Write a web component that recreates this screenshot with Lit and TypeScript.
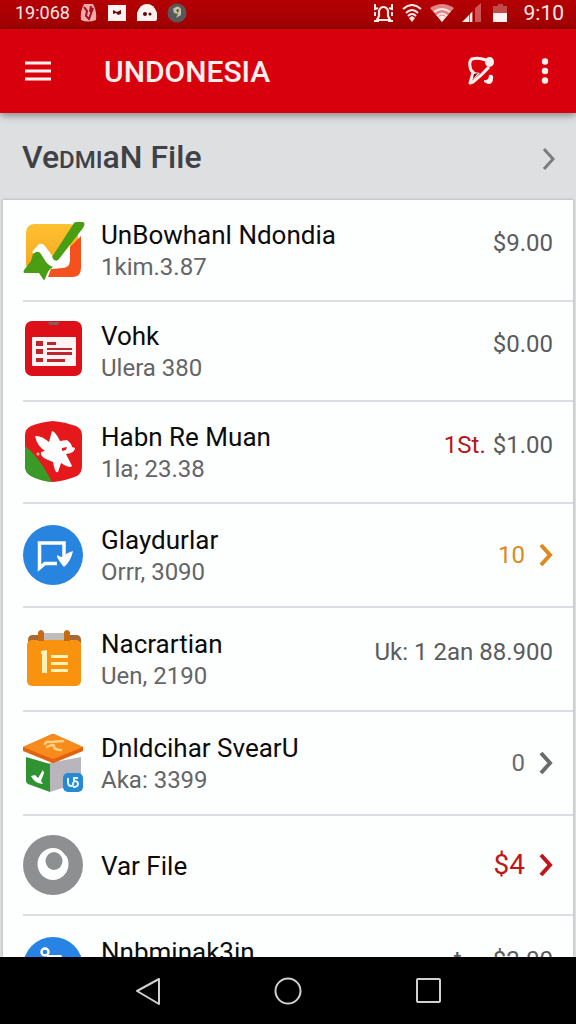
import { LitElement, html, css, svg, nothing, type TemplateResult } from "lit";
import { customElement, property } from "lit/decorators.js";
import { classMap } from "lit/directives/class-map.js";

type Size = "short" | "medium" | "tall";

interface Entry {
  icon: string;
  title: string;
  detail?: string;
  value: string;
  prefix?: string;
  mutedPrefix?: boolean;
  tone?: "amber" | "red" | "grey";
  link?: boolean;
  size: Size;
}

const ENTRIES: Entry[] = [
  { icon: "check", title: "UnBowhanl Ndondia", detail: "1kim.3.87", value: "$9.00", size: "medium" },
  { icon: "card", title: "Vohk", detail: "Ulera 380", value: "$0.00", size: "short" },
  { icon: "shield", title: "Habn Re Muan", detail: "1la; 23.38", prefix: "1St.", value: "$1.00", size: "medium" },
  { icon: "chat", title: "Glaydurlar", detail: "Orrr, 3090", value: "10", tone: "amber", link: true, size: "tall" },
  { icon: "calendar", title: "Nacrartian", detail: "Uen, 2190", value: "Uk: 1 2an 88.900", size: "tall" },
  { icon: "box", title: "Dnldcihar SvearU", detail: "Aka: 3399", value: "0", tone: "grey", link: true, size: "tall" },
  { icon: "ring", title: "Var File", value: "$4", tone: "red", link: true, size: "short" },
  { icon: "globe", title: "Nnbminak3in", detail: "\u00a0", prefix: "t.\u00a0\u00a0\u00a0", mutedPrefix: true, value: "$2.00", size: "tall" },
];

const ICONS: Record<string, TemplateResult> = {
  check: svg`
    <defs>
      <linearGradient id="y" x1="0" y1="0" x2="0" y2="1"><stop offset="0" stop-color="#fdc12f"/><stop offset="1" stop-color="#f9a825"/></linearGradient>
    </defs>
    <path d="M12 4H46Q54 4 55 12V46H3V13Q3 4 12 4Z" fill="url(#y)"/>
    <path d="M58 16V48Q58 57 49 57H25L29 46H46V28Z" fill="#f4511e"/>
    <path d="M9 32L15 25Q19 22 22 26L31 38 47 22V40Q47 47 40 48L29 49 20 44Z" fill="#fff"/>
    <path d="M51 3Q52 2 53 2H60Q63 3 60 8L36 39Q34 42 31 40L29 37Z" fill="#4a9e14"/>
    <path d="M10 34L13 32Q16 31 18 34L23 42Q26 46 30 47Q26 49 24 54L22 59Q21 61 20 59L16 53H1Q0 52 1 50L8 41Z" fill="#4a9e14"/>`,
  card: svg`
    <rect x="2" y="0" width="57" height="55" rx="7" fill="#dd1019"/>
    <path d="M24 1H37L34 4H27Z" fill="#8c5a5e"/>
    <rect x="9" y="16" width="44" height="29" rx="1" fill="#fff4f1"/>
    <path d="M13 20h7v5h-7zM13 28h7v5h-7zM13 37h7v4h-7zM24 21h9v3h-9zM24 27h25v2h-25zM24 31h25v3h-25zM24 38h18v3h-18z" fill="#bb2730"/>`,
  shield: svg`
    <path d="M30 -1Q42 0 53 4Q59 7 59 13V44Q59 51 54 54Q42 59 30 60Q18 59 8 54Q2 51 2 44V13Q2 7 8 4Q18 0 30 -1Z" fill="#e5181b"/>
    <path d="M2 24Q17 36 29 60Q17 59 8 54Q2 51 2 44Z" fill="#3a9a27"/>
    <path d="M12 14Q18 13 26 20L29 9Q32 9 37 19L44 18Q49 22 49 25L52 26Q52 31 43 32L49 44Q47 47 38 41L35 50Q32 52 30 40L25 38Q17 35 18 30L22 29Q14 24 12 14Z" fill="#fff"/>
    <path d="M39 26L44 25 43 28 39 29Z" fill="#e5181b"/>
    <circle cx="15" cy="32" r="1.5" fill="#ffb8ac"/>`,
  chat: svg`
    <circle cx="30" cy="30" r="30" fill="#2784df"/>
    <path d="M41 31V18H16.500V43L22 38.500H34" fill="none" stroke="#fff" stroke-width="3.500"/>
    <path d="M34 30L38 32 42 30Q44 28 50 26Q48 36 41 42Q38 39 34 32Z" fill="#fff"/>`,
  calendar: svg`
    <path d="M5 14V11Q5 6 10 6H53Q58 6 58 11V14Z" fill="#a56a35"/>
    <path d="M21 4H42V12H21Z" fill="#bfbcb9"/>
    <rect x="4" y="11" width="54" height="46" rx="5" fill="#f9920f"/>
    <path d="M15 12V3Q18 -1 21 3V12ZM41 12V3Q44 -1 47 3V12Z" fill="#c76b12"/>
    <path d="M18 22L24 21V44H19V25H18ZM28 26h17v3h-17zM28 33h17v3h-17zM28 40h17v3h-17z" fill="#fff1b8"/>`,
  box: svg`
    <path d="M26 30L58 24V49L27 59Z" fill="#b9b5bc"/>
    <path d="M3 24L27 31V59L5 51Q3 50 3 48Z" fill="#2f9331"/>
    <path d="M0 14L27 2Q30 0 33 2L60 14V18L33 29Q30 31 27 29L0 18Z" fill="#e2620d"/>
    <path d="M0 14L27 2Q30 0 33 2L60 14 33 25Q30 27 27 25Z" fill="#f98a1c"/>
    <path d="M22 11Q23 8 28 9L40 8M24 14Q32 10 31 14Q32 17 38 17" fill="none" stroke="#ffd083" stroke-width="2.500" stroke-linecap="round"/>
    <path d="M8 43L12 42 15 45 20 37 21 40 18 48 20 51Q11 50 8 43Z" fill="#fff"/>
    <rect x="40" y="40" width="20" height="19" rx="5" fill="#2589d4"/>
    <path d="M45 45V49Q45 53 48 53T50 49M55 45H51V48Q55 48 55 51T50 54" fill="none" stroke="#e3f4ff" stroke-width="2"/>`,
  ring: svg`
    <circle cx="30" cy="30" r="30" fill="#8e8f90"/>
    <ellipse cx="30" cy="29" rx="15.500" ry="16" fill="#fff"/>
    <ellipse cx="31" cy="26" rx="8.500" ry="9" fill="#8e8f90"/>
    <path d="M37 14L44 17 43 21Z" fill="#8e8f90"/>`,
  globe: svg`
    <circle cx="30" cy="30" r="30" fill="#2784e4"/>
    <circle cx="22" cy="15" r="3.500" fill="none" stroke="#fff" stroke-width="2.500"/>
    <path d="M24 18H38L41 22V30H24Z" fill="#fff"/>`,
};

@customElement("row-chevron")
export class RowChevron extends LitElement {
  @property({ type: Boolean, reflect: true }) thin = false;

  static styles = css`
    :host { display: block; width: 14px; height: 24px; }
    svg { display: block; width: 100%; height: 100%; }
    path { fill: none; stroke: currentColor; stroke-width: 4; }
    :host([thin]) path { stroke-width: 3; }
  `;

  render() {
    return html`<svg viewBox="0 0 14 24" aria-hidden="true"><path d="M2 2L11 12 2 22" /></svg>`;
  }
}

@customElement("status-bar")
export class StatusBar extends LitElement {
  static styles = css`
    :host {
      display: flex;
      align-items: center;
      justify-content: space-between;
      height: 29px;
      padding: 0 12px 4px 15px;
      box-sizing: border-box;
      background: linear-gradient(#b40004, #a00002);
      color: #ffe9e6;
      font-size: 18px;
      line-height: 24px;
    }
    .group { display: flex; align-items: center; gap: 10px; }
    .right { gap: 8px; }
    .clock { margin-left: 6px; font-size: 21px; }
    svg { display: block; }
  `;

  render() {
    return html`
      <div class="group">
        <span>19:068</span>
        <svg width="17" height="20" viewBox="0 0 17 20">
          <path d="M4 1H13Q17 8 16 17Q8 20 1 17Q0 8 4 1Z" fill="#f3a9aa"/>
          <path d="M4 4L7 8 6 13 9 16 13 5 10 9 11 3" fill="none" stroke="#a4101a" stroke-width="2"/>
        </svg>
        <svg width="20" height="18" viewBox="0 0 20 18">
          <rect x="1" y="1" width="18" height="16" fill="#fff3f1"/>
          <path d="M6 6L10 8 14 6V10L11 11 9 9 6 10Z" fill="#6b0a0c"/>
        </svg>
        <svg width="20" height="18" viewBox="0 0 20 18">
          <path d="M0 17V9Q3 0 10 0T20 9V15Q20 17 18 17Z" fill="#fff3f1"/>
          <circle cx="8" cy="10" r="2" fill="#5c0a0c"/><circle cx="13" cy="10" r="1.500" fill="#5c0a0c"/>
        </svg>
        <svg width="20" height="20" viewBox="0 0 20 20">
          <circle cx="10" cy="10" r="9.500" fill="#58595c"/>
          <path d="M6 6Q11 1 14 6V12L9 15 11 11 7 10Z" fill="#c9c39b"/>
          <path d="M9 7L12 6 11 10Z" fill="#3c4a52"/>
        </svg>
      </div>
      <div class="group right">
        <svg width="21" height="20" viewBox="0 0 21 20">
          <path d="M4 17H17L15 13V8Q14 4 10.500 4T6 8V13Z" fill="none" stroke="currentColor" stroke-width="2.200"/>
          <path d="M2 1V6L5 5M2 9V13M19 1V6L16 5M19 9V13M1 18H6M20 18H15" fill="none" stroke="currentColor" stroke-width="2"/>
        </svg>
        <svg width="20" height="18" viewBox="0 0 20 18">
          <path d="M1 5Q10 -3 19 5M4 9Q10 3 16 9M6 12Q10 8 14 12" fill="none" stroke="currentColor" stroke-width="2"/>
          <path d="M7 14L10 12 13 14 10 18Z" fill="currentColor"/>
        </svg>
        <svg width="24" height="18" viewBox="0 0 24 18">
          <path d="M0 4Q12 -4 24 4L12 18Z" fill="#e08583"/>
          <path d="M4 8Q12 2 20 8M7 12Q12 7 17 12" fill="none" stroke="currentColor" stroke-width="2"/>
          <path d="M8 13Q12 10 16 13L12 18Z" fill="currentColor"/>
        </svg>
        <svg width="20" height="20" viewBox="0 0 20 20">
          <path d="M7 19V12L11 8V19ZM13 19V5L19 0V19Z" fill="#cf5554"/>
          <path d="M0 19L7 12V19ZM8 11L10 9V19H8Z" fill="currentColor"/>
        </svg>
        <svg width="20" height="20" viewBox="0 0 20 20">
          <path d="M3 3H8V1H13V3H17V10H3Z" fill="#c14a4b"/>
          <path d="M3 10H17V19H3Z" fill="#fff3f1"/>
        </svg>
        <span class="clock">9:10</span>
      </div>
    `;
  }
}

@customElement("entry-row")
export class EntryRow extends LitElement {
  @property({ attribute: false }) entry!: Entry;

  static styles = css`
    :host { display: block; }
    .row {
      display: flex;
      align-items: center;
      gap: 18px;
      box-sizing: border-box;
      margin-left: 20px;
      padding-right: 20px;
      border-bottom: 2px solid #dcdde0;
      color: inherit;
      text-decoration: none;
    }
    .short { min-height: 100px; }
    .medium { min-height: 102px; }
    .tall { min-height: 104px; }
    .icon { flex: none; width: 60px; height: 60px; overflow: visible; }
    .text { flex: 1; min-width: 0; padding-top: 2px; color: #0c0c0d; font-size: 26px; line-height: 32px; }
    .detail { color: #646567; font-size: 24px; }
    .text > span { display: block; white-space: nowrap; }
    .value {
      display: flex;
      align-items: center;
      gap: 14px;
      color: #5a5b5d;
      font-size: 24px;
      line-height: 32px;
      white-space: nowrap;
    }
    .plain { gap: 7px; padding-bottom: 14px; }
    .prefix { color: #b5171c; }
    .muted { color: inherit; }
    .amber { color: #dc8a1c; }
    .grey { color: #6a6b6d; }
    .red { color: #c2151b; font-size: 28px; }
  `;

  render() {
    const e = this.entry;
    return html`
      <a href="#" class=${classMap({ row: true, [e.size]: true })}>
        <svg class="icon" viewBox="0 0 60 60" aria-hidden="true">${ICONS[e.icon]}</svg>
        <div class="text">
          <span>${e.title}</span>
          ${e.detail ? html`<span class="detail">${e.detail}</span>` : nothing}
        </div>
        <div class="value ${e.tone ?? "plain"}">
          ${e.prefix
            ? html`<span class=${classMap({ prefix: true, muted: !!e.mutedPrefix })}>${e.prefix}</span>`
            : nothing}
          <span>${e.value}</span>
          ${e.link ? html`<row-chevron></row-chevron>` : nothing}
        </div>
      </a>
    `;
  }
}

@customElement("app-root")
export class AppRoot extends LitElement {
  static styles = css`
    :host {
      display: flex;
      flex-direction: column;
      height: 100vh;
      background: #dddfe1;
      font-family: Roboto, "Liberation Sans", sans-serif;
    }
    button { border: 0; padding: 0; background: none; color: inherit; display: block; }
    svg { display: block; }
    .bar {
      flex: none;
      position: relative;
      display: flex;
      align-items: center;
      height: 84px;
      padding: 0 24px;
      box-sizing: border-box;
      background: #d9000d;
      color: #fff0ee;
      box-shadow: 0 2px 8px rgba(0, 0, 0, 0.45);
    }
    h1 { flex: 1; margin: 0 0 0 52px; padding-top: 2px; font-size: 30px; line-height: 36px; font-weight: 500; }
    .actions { display: flex; align-items: center; gap: 43px; }
    .section {
      flex: none;
      display: flex;
      align-items: center;
      justify-content: space-between;
      min-height: 87px;
      padding: 4px 20px 0 22px;
      box-sizing: border-box;
      color: #7b7d80;
    }
    h2 { margin: 0; font-size: 32px; line-height: 36px; font-weight: 500; color: #3e4246; }
    .small { font-size: 24px; }
    .list {
      flex: 1;
      min-height: 0;
      margin: 0 3px;
      padding: 0;
      list-style: none;
      overflow-y: auto;
      scrollbar-width: none;
      background: #fdfefe;
      box-shadow: 0 0 3px rgba(0, 0, 0, 0.25);
    }
    .nav {
      flex: none;
      position: relative;
      display: flex;
      align-items: center;
      justify-content: center;
      gap: 112px;
      height: 67px;
      background: #000;
      color: #d0d0d0;
    }
    .nav path, .nav circle, .nav rect { fill: none; stroke: currentColor; stroke-width: 2; stroke-linejoin: round; }
  `;

  render() {
    return html`
      <status-bar></status-bar>
      <header class="bar">
        <button aria-label="Menu">
          <svg width="28" height="22" viewBox="0 0 28 22"><path d="M1 3H27M1 11H27M1 19H27" stroke="currentColor" stroke-width="3"/></svg>
        </button>
        <h1>UNDONESIA</h1>
        <div class="actions">
          <button aria-label="Share">
            <svg width="28" height="30" viewBox="0 0 28 30">
              <path d="M19 4Q11 1 5 3Q2 5 3 10Q3 14 6 16Q5 21 3 27L6 26Q15 19 22 11" fill="none" stroke="currentColor" stroke-width="3" stroke-linejoin="round"/>
              <path d="M7 16L13 17 6 24Z" fill="currentColor"/>
              <path d="M7 18L11 17 6 23Z" fill="#7d0008"/>
              <ellipse cx="22.500" cy="6" rx="4.500" ry="5" fill="currentColor"/>
              <path d="M22 19Q27 18 26 23Q26 28 21 28L17 26V24Q22 25 22 19Z" fill="currentColor"/>
            </svg>
          </button>
          <button aria-label="More options">
            <svg width="14" height="26" viewBox="0 0 14 26"><g fill="currentColor"><circle cx="7" cy="3.500" r="3.200"/><circle cx="7" cy="13" r="3.200"/><circle cx="7" cy="22.500" r="3.200"/></g></svg>
          </button>
        </div>
      </header>
      <div class="section">
        <h2>Ve<span class="small">DMI</span>aN File</h2>
        <row-chevron thin></row-chevron>
      </div>
      <ul class="list">
        ${ENTRIES.map((entry) => html`<li><entry-row .entry=${entry}></entry-row></li>`)}
      </ul>
      <nav class="nav">
        <button aria-label="Back"><svg width="28" height="28" viewBox="0 0 28 28"><path d="M25 2V27L3 14Z"/></svg></button>
        <button aria-label="Home"><svg width="28" height="28" viewBox="0 0 28 28"><circle cx="14" cy="14" r="12.500"/></svg></button>
        <button aria-label="Recent apps"><svg width="28" height="28" viewBox="0 0 28 28"><rect x="3" y="2" width="23" height="23" rx="1"/></svg></button>
      </nav>
    `;
  }
}
